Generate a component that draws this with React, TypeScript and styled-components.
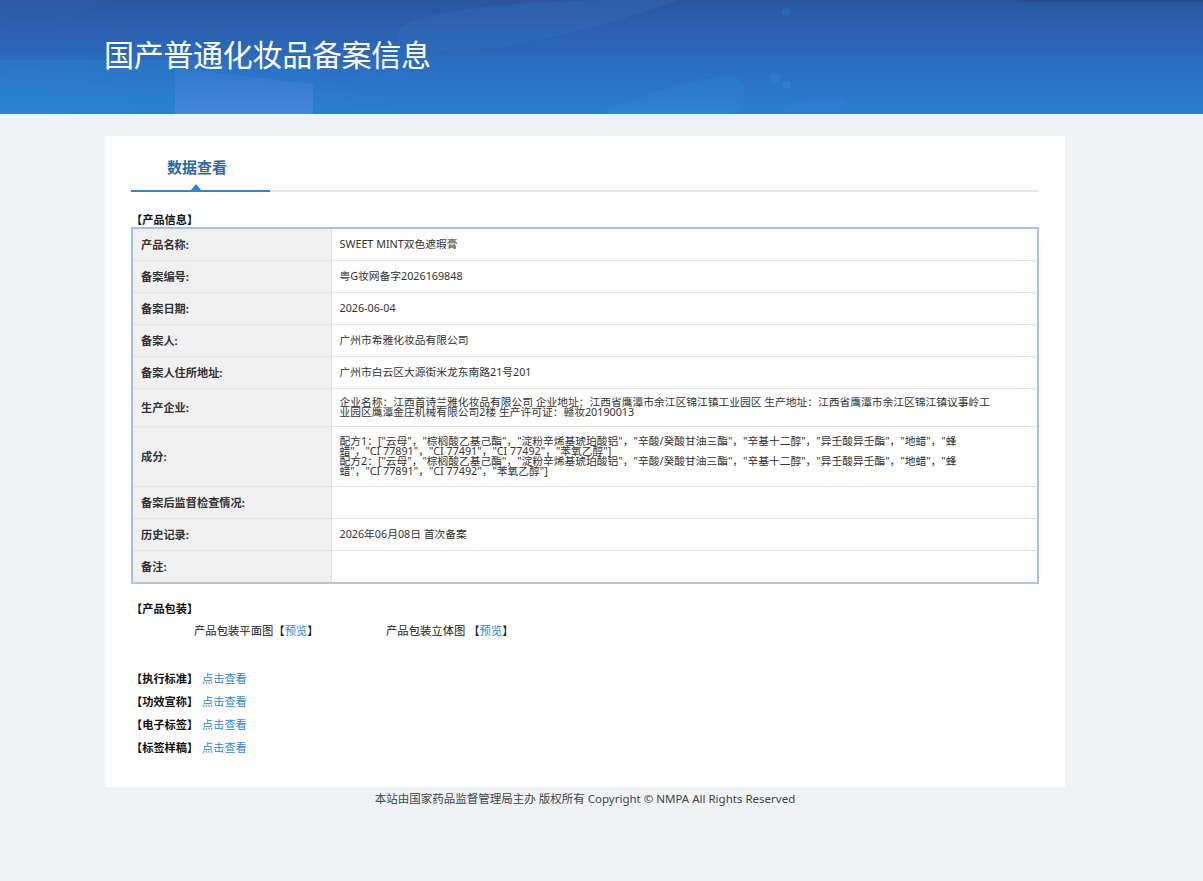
import React from "react";
import styled, { createGlobalStyle } from "styled-components";

const Global = createGlobalStyle`
  html, body { margin: 0; padding: 0; background: #eff3f6; }
  body { font-family: "Noto Sans", "Noto Sans CJK SC", sans-serif; font-size: 11.2px; color: #333; }
`;
const Page = styled.div`
  min-height: 881px;
  display: flex;
  flex-direction: column;
`;
const Header = styled.header`
  position: relative;
  height: 114px;
  padding: 35px 0 0 104px;
  box-sizing: border-box;
  overflow: hidden;
  background: linear-gradient(180deg, #2a569f 0%, #2b6cc0 55%, #2a7fd0 100%);
`;
const HeaderArt = styled.svg`
  position: absolute;
  left: 0;
  top: 0;
  width: 1203px;
  height: 114px;
`;
const Title = styled.h1`
  position: relative;
  margin: 0;
  font-family: "Noto Sans CJK SC", sans-serif;
  font-size: 30px;
  line-height: 36px;
  font-weight: 400;
  letter-spacing: -0.3px;
  color: #fff;
`;
const Card = styled.main`
  width: 960px;
  height: 651px;
  margin: 22px 0 0 105px;
  padding: 0 26px;
  box-sizing: border-box;
  background: #fff;
`;
const TabBar = styled.div`
  height: 54px;
  border-bottom: 2px solid #e6e6e6;
`;
const Tab = styled.div`
  position: relative;
  width: 139px;
  height: 56px;
  box-sizing: border-box;
  padding: 20px 0 0 36px;
  border-bottom: 2px solid #2a88d8;
  font-family: "Noto Sans CJK SC", sans-serif;
  font-size: 15px;
  line-height: 22px;
  font-weight: 700;
  color: #2a6aa8;
  &::after {
    content: "";
    position: absolute;
    left: 60px;
    bottom: 0;
    border-left: 5px solid transparent;
    border-right: 5px solid transparent;
    border-bottom: 6px solid #2a88d8;
  }
`;
const SectionTitle = styled.div<{ $top: number }>`
  margin-top: ${(p) => p.$top}px;
  font-size: 11.2px;
  line-height: 15px;
  font-weight: 700;
  color: #111;
`;
const InfoTable = styled.table`
  width: 908px;
  border-collapse: collapse;
  table-layout: fixed;
  border: 2px solid #a3c2e8;
  border-bottom-color: #b4c6dc;
`;
const Row = styled.tr<{ $h: number }>`
  height: ${(p) => p.$h}px;
`;
const Label = styled.th`
  width: 199px;
  padding: 1px 0 0 8px;
  box-sizing: border-box;
  background: #f0f0f0;
  border: 1px solid #e3e3e3;
  border-left: 0;
  text-align: left;
  font-size: 11.2px;
  line-height: 14px;
  font-weight: 700;
  color: #333;
`;
const Value = styled.td`
  padding: 0 46px 0 8px;
  border: 1px solid #e3e3e3;
  border-right: 0;
  font-size: 10.75px;
  line-height: 10px;
  color: #333;
  word-break: break-all;
`;
const PackRow = styled.div`
  display: flex;
  margin: 8px 0 0 63px;
  line-height: 14px;
  font-size: 11.33px;
  color: #222;
`;
const PackItem = styled.span<{ $w: number }>`
  width: ${(p) => p.$w}px;
  white-space: nowrap;
`;
const Link = styled.a`
  color: #2a88d8;
  text-decoration: none;
`;
const Docs = styled.div`
  margin-top: 34px;
  display: flex;
  flex-direction: column;
  gap: 9px;
`;
const DocRow = styled.div`
  display: flex;
  line-height: 14px;
`;
const DocLabel = styled.span`
  width: 71px;
  font-weight: 700;
  color: #111;
`;
const Footer = styled.footer`
  width: 960px;
  margin: 5px 0 0 105px;
  text-align: center;
  font-size: 11.5px;
  line-height: 14px;
  color: #444;
`;

const rows: { label: string; h: number; value?: React.ReactNode }[] = [
  { label: "产品名称:", h: 32, value: "SWEET MINT双色遮瑕膏" },
  { label: "备案编号:", h: 32, value: "粤G妆网备字2026169848" },
  { label: "备案日期:", h: 32, value: "2026-06-04" },
  { label: "备案人:", h: 32, value: "广州市希雅化妆品有限公司" },
  { label: "备案人住所地址:", h: 32, value: "广州市白云区大源街米龙东南路21号201" },
  {
    label: "生产企业:",
    h: 38,
    value: "企业名称：江西首诗兰雅化妆品有限公司 企业地址：江西省鹰潭市余江区锦江镇工业园区 生产地址：江西省鹰潭市余江区锦江镇议事岭工业园区鹰潭金庄机械有限公司2楼 生产许可证：赣妆20190013",
  },
  {
    label: "成分:",
    h: 60,
    value: (
      <>
        配方1：["云母"，"棕榈酸乙基己酯"，"淀粉辛烯基琥珀酸铝"，"辛酸/癸酸甘油三酯"，"辛基十二醇"，"异壬酸异壬酯"，"地蜡"，"蜂
        <br />
        蜡"，"CI 77891"，"CI 77491"，"CI 77492"，"苯氧乙醇"]
        <br />
        配方2：["云母"，"棕榈酸乙基己酯"，"淀粉辛烯基琥珀酸铝"，"辛酸/癸酸甘油三酯"，"辛基十二醇"，"异壬酸异壬酯"，"地蜡"，"蜂
        <br />
        蜡"，"CI 77891"，"CI 77492"，"苯氧乙醇"]
      </>
    ),
  },
  { label: "备案后监督检查情况:", h: 32 },
  { label: "历史记录:", h: 32, value: "2026年06月08日 首次备案" },
  { label: "备注:", h: 33 },
];
const docs = ["【执行标准】", "【功效宣称】", "【电子标签】", "【标签样稿】"];

export default function App() {
  return (
    <Page>
      <Global />
      <Header>
        <HeaderArt viewBox="0 0 1203 114" aria-hidden="true">
          <defs>
            <linearGradient id="block" x1="0" y1="0" x2="0" y2="1">
              <stop offset="0" stopColor="#3f7ed6" stopOpacity="0.35" />
              <stop offset="1" stopColor="#4a88de" stopOpacity="0.9" />
            </linearGradient>
            <linearGradient id="glow" x1="0" y1="0" x2="1" y2="0">
              <stop offset="0" stopColor="#2a98d8" stopOpacity="0.5" />
              <stop offset="1" stopColor="#2a98d8" stopOpacity="0" />
            </linearGradient>
          </defs>
          <path d="M0 60H420V114H0Z" fill="url(#glow)" opacity="0.5" />
          <path d="M0 0H110L40 33L0 22Z" fill="#3a78c4" opacity="0.08" />
          <path d="M175 68L313 84V114H175Z" fill="url(#block)" />
          <path d="M400 28C430 8 520 2 600 0L680 0C620 20 530 50 450 50C410 52 390 40 400 28Z" fill="#4a90d8" opacity="0.12" />
          <path d="M600 114C640 95 700 76 730 76C750 78 748 100 735 114Z" fill="#3aa0dc" opacity="0.14" />
          <path d="M780 114C790 100 820 92 845 97C850 102 840 110 835 114Z" fill="#4090e0" opacity="0.14" />
          <circle cx="786" cy="12" r="4" fill="#2f84d8" opacity="0.35" />
          <circle cx="775" cy="78" r="5.5" fill="#2f84d8" opacity="0.45" />
          <circle cx="787" cy="85" r="4" fill="#2f8ae0" opacity="0.6" />
          <path d="M1015 0H1203V2H1030Z" fill="#2b4a80" opacity="0.7" />
        </HeaderArt>
        <Title>国产普通化妆品备案信息</Title>
      </Header>
      <Card>
        <TabBar>
          <Tab>数据查看</Tab>
        </TabBar>
        <SectionTitle $top={20}>【产品信息】</SectionTitle>
        <InfoTable>
          <tbody>
            {rows.map((r) => (
              <Row key={r.label} $h={r.h}>
                <Label>{r.label}</Label>
                <Value>{r.value}</Value>
              </Row>
            ))}
          </tbody>
        </InfoTable>
        <SectionTitle $top={17}>【产品包装】</SectionTitle>
        <PackRow>
          <PackItem $w={192}>产品包装平面图【<Link>预览</Link>】</PackItem>
          <PackItem $w={130}>产品包装立体图 【<Link>预览</Link>】</PackItem>
        </PackRow>
        <Docs>
          {docs.map((d) => (
            <DocRow key={d}>
              <DocLabel>{d}</DocLabel>
              <Link>点击查看</Link>
            </DocRow>
          ))}
        </Docs>
      </Card>
      <Footer>本站由国家药品监督管理局主办 版权所有 Copyright © NMPA All Rights Reserved</Footer>
    </Page>
  );
}
